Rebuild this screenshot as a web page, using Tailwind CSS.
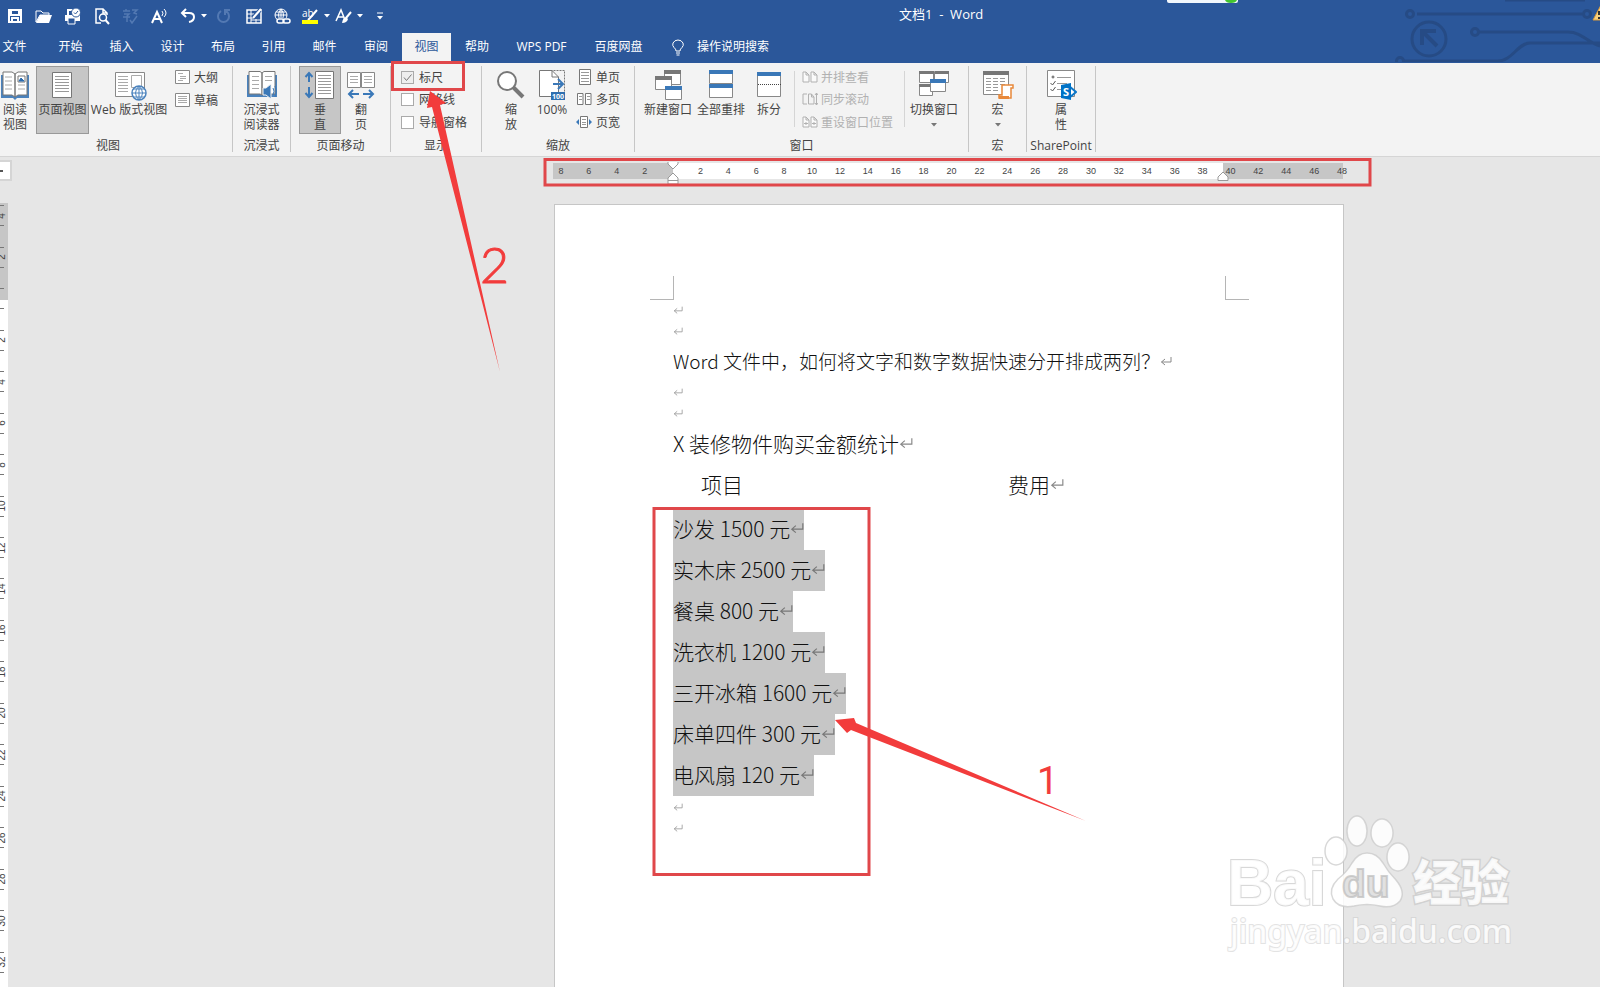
<!DOCTYPE html>
<html lang="zh-CN">
<head>
  <meta charset="UTF-8" />
  <meta name="viewport" content="width=device-width, initial-scale=1.0"/>
  <title>文档1 - Word</title>
  <script src="https://cdn.jsdelivr.net/npm/@tailwindcss/browser@4"></script>
</head>
<body class="relative flex min-h-screen flex-col overflow-hidden bg-[#e6e6e6] font-['Open_Sans','Noto_Sans_CJK_SC',sans-serif] text-xs text-[#444]">

  <!-- Shared shapes -->
  <svg class="hidden">
    <symbol id="ret" viewBox="0 0 12 12"><path d="M11 2V7H1.5M5 4L1.5 7L5 10" fill="none" stroke="currentColor"/></symbol>
    <symbol id="caret" viewBox="0 0 6 4"><path d="M0 0H6L3 3.5Z" fill="currentColor"/></symbol>
    <symbol id="twodocs" viewBox="0 0 16 14"><path d="M1 2H4L7 5V12H1ZM4 2V5H7M9 2H12L15 5V12H9ZM12 2V5H15" fill="#fafafa" stroke="currentColor"/></symbol>
  </svg>

  <!-- Title bar + tabs -->
  <header class="relative bg-[#2b579a] text-white">
    <svg class="absolute right-0 top-0" width="440" height="62" fill="none" stroke="#264b85" stroke-width="3">
      <path d="M345 0H425M257 14H422M318 32H408C422 32 428 43 440 46M440 43H370C358 43 352 61 338 61H243"/>
      <circle cx="250" cy="14" r="3.500"/><circle cx="427" cy="14" r="3.500"/><circle cx="315" cy="32" r="3.500"/><circle cx="240" cy="61" r="3.500"/>
      <circle cx="269" cy="39" r="17"/>
      <path d="M262 45V31H276M263 32L277 46" stroke-width="4"/>
      <path d="M7 0H78V1Q78 3 76 3H9Q7 3 7 1Z" fill="#f2f7fc" stroke="none"/>
      <path d="M65 0H77Q76 3 71 3Q66 3 65 0Z" fill="#43c52f" stroke="none"/>
      <path d="M433 20L441 5V20Z" fill="#fbd27c" stroke="#d89a3c" stroke-width="1"/>
      <path d="M439 11V15M439 17V19" stroke="#333" stroke-width="2"/>
    </svg>

    <div class="relative flex h-8 items-center">
      <button class="flex w-[29px] justify-center" aria-label="保存"><svg width="16" height="16" fill="none" stroke="#fff" stroke-width="2"><path d="M2 2H14V14H2Z"/><path d="M4 2V7H12V2M5 14V10H11V14"/></svg></button>
      <button class="flex w-[29px] justify-center" aria-label="打开"><svg width="18" height="16" fill="#fff"><path d="M1 14V3H6L8 5H14V7H5Z" fill="none" stroke="#fff"/><path d="M5 7H17L14 15H1Z"/></svg></button>
      <button class="flex w-[29px] justify-center" aria-label="快速打印"><svg width="18" height="17"><path d="M1 7H16V13H1Z" fill="#fff"/><path d="M4 7V2H9" stroke="#fff" fill="none" stroke-width="2"/><path d="M4 10H11V16H4Z" fill="#2b579a" stroke="#fff"/><circle cx="12" cy="4.500" r="4.500" fill="#fff" stroke="#2b579a"/><path d="M10 4.500L11.500 6L14 3" stroke="#2b579a" fill="none"/></svg></button>
      <button class="flex w-[29px] justify-center" aria-label="打印预览"><svg width="16" height="17" fill="none" stroke="#fff" stroke-width="1.500"><path d="M7 15H2V1H9L13 5V7M9 1V5H13"/><circle cx="9" cy="9.500" r="3.500"/><path d="M11.500 12L15 16" stroke-width="2"/></svg></button>
      <button class="flex w-[29px] justify-center text-[#5379b3]" aria-label="拼写检查"><svg width="17" height="16" fill="none" stroke="currentColor" stroke-width="1.500"><path d="M1 3H8M4 1V3M2 6H7L5 8V14M1 9H8M10 2H15L12 5L15 6M8 12L10 15L15 8"/></svg></button>
      <button class="flex w-[29px] justify-center" aria-label="大声朗读"><svg width="18" height="16" fill="none" stroke="#fff"><path d="M1 15L6 4L11 15M3 11H9" stroke-width="2"/><path d="M11 3Q13 5 11 8M13 1Q17 5 13 9"/></svg></button>
      <button class="flex w-[27px] justify-center" aria-label="撤消"><svg width="16" height="16" fill="none" stroke="#fff" stroke-width="2"><path d="M6 1L2 5L6 9M2 5H9Q14 5 14 9Q14 13 9 14"/></svg></button>
      <button class="flex w-[6px] justify-center" aria-label="撤消选项"><svg width="6" height="4"><use href="#caret"/></svg></button>
      <button class="flex w-[33px] justify-center text-[#5379b3]" aria-label="重复"><svg width="16" height="16" fill="none" stroke="currentColor" stroke-width="2"><path d="M5 3Q2 5 2 8.500A5.500 5.500 0 0 0 13 8.500Q13 5 10 3M9 7V2H14"/></svg></button>
      <button class="flex w-[27px] justify-center" aria-label="绘制表格"><svg width="16" height="16" fill="none" stroke="#fff"><path d="M1 2H15V15H1Z" stroke-width="1.500"/><path d="M1 6H8M1 10H7M5 2V15M10 11V15M5 12H15"/><path d="M7 10L14 2" stroke="#2b579a" stroke-width="4"/><path d="M7 10L15 1" stroke-width="2"/></svg></button>
      <button class="flex w-[30px] justify-center" aria-label="超链接"><svg width="18" height="17" fill="none" stroke="#fff"><circle cx="8" cy="7" r="6"/><path d="M2 7H14M8 1V13M3 4H13M8 1Q3 7 8 13Q13 7 8 1"/><path d="M5 10H17V16H5Z" fill="#2b579a" stroke="none"/><rect x="4" y="11" width="7" height="4" rx="2" stroke-width="1.500"/><rect x="10" y="11" width="7" height="4" rx="2" stroke-width="1.500"/></svg></button>
      <button class="flex w-[27px] justify-center" aria-label="突出显示颜色"><svg class="overflow-visible" width="17" height="17"><text x="0" y="9" font-size="10" fill="#fff">ab</text><path d="M15 2L8 10L6 12" stroke="#fff" stroke-width="2"/><path d="M0 12H16V16H0Z" fill="#ff0"/></svg></button>
      <button class="flex w-[6px] justify-center" aria-label="颜色选项"><svg width="6" height="4"><use href="#caret"/></svg></button>
      <button class="flex w-[27px] justify-center" aria-label="格式"><svg width="17" height="17" fill="none" stroke="#fff"><path d="M1 13L6 2L10 12M3 9H9" stroke-width="1.500"/><path d="M16 4L11 10" stroke-width="2"/><path d="M11 9Q8 9 7 15Q12 15 13 11Z" fill="#fff" stroke="none"/></svg></button>
      <button class="flex w-[6px] justify-center" aria-label="格式选项"><svg width="6" height="4"><use href="#caret"/></svg></button>
      <button class="flex w-[34px] justify-center" aria-label="自定义快速访问工具栏"><svg width="6" height="8"><path d="M0 1H6" stroke="#fff"/><use href="#caret" y="4" width="6" height="4"/></svg></button>
      <h1 class="absolute left-[899px] top-1 text-[13px] leading-5 whitespace-pre">文档1  -  Word</h1>
    </div>

    <nav class="relative flex h-[31px] items-stretch leading-7">
      <button class="w-[45px] pr-4 pb-px">文件</button>
      <button class="w-[51px] pb-px">开始</button>
      <button class="w-[51px] pb-px">插入</button>
      <button class="w-[51px] pb-px">设计</button>
      <button class="w-[50px] pb-px">布局</button>
      <button class="w-[51px] pb-px">引用</button>
      <button class="w-[51px] pb-px">邮件</button>
      <button class="w-[52px] pb-px">审阅</button>
      <button class="mt-px w-[49px] bg-[#f3f3f3] pb-[2px] text-[#2b579a]">视图</button>
      <button class="w-[52px] pb-px">帮助</button>
      <button class="w-[77px] pb-px">WPS PDF</button>
      <button class="w-[77px] pb-px">百度网盘</button>
      <label for="tellme" class="ml-[14px] flex w-[26px] items-center"><svg width="14" height="18" fill="none" stroke="#fff"><path d="M5 12Q5 10 3 8.500Q1 6.500 2 4Q3.500 1 7 1Q10.500 1 12 4Q13 6.500 11 8.500Q9 10 9 12ZM5 14H9M5.500 16H8.500"/></svg></label>
      <input id="tellme" type="text" placeholder="操作说明搜索" class="w-[120px] bg-transparent pb-px outline-none placeholder:text-white"/>
    </nav>
  </header>

  <!-- Ribbon -->
  <section class="flex h-[94px] shrink-0 border-b border-[#d5d5d5] bg-[#f3f3f3] pt-[3px] leading-[15px]">
    <!-- 视图 -->
    <div class="w-[232px]">
      <div class="flex h-[68px]">
        <button class="flex w-[30px] flex-col items-center pt-1"><svg class="h-8 w-8 shrink-0" fill="#fff" stroke="#777"><path d="M2 5H30V28H18L16 30L14 28H2Z" fill="#4a82bd" stroke="none"/><path d="M4 2H13L16 4V27L13 25H4ZM28 2H19L16 4V27L19 25H28Z"/><path d="M6 7H13M6 11H13M6 15H13M6 19H13M19 15H26M19 19H26" stroke="#aaa"/><path d="M19 6H26V12H19Z" stroke="#777"/><path d="M20 11L22 8L25 11Z" fill="#2b6cb0" stroke="#2b6cb0"/></svg><span class="w-6">阅读视图</span></button>
        <button class="ml-[6px] flex w-[53px] flex-col items-center whitespace-nowrap border border-[#999] bg-[#c6c6c6] pt-[3px]"><svg class="h-8 w-8 shrink-0" fill="#fff" stroke="#777"><path d="M5.500 2.500H24.500V27.500H5.500Z"/><path d="M8 6.500H22M8 9.500H22M8 12.500H22M8 15.500H22M8 18.500H22M8 21.500H22" stroke="#999"/></svg>页面视图</button>
        <button class="flex w-[80px] flex-col items-center whitespace-nowrap pt-1"><svg class="h-8 w-8 shrink-0 overflow-visible" fill="#fff" stroke="#888"><path d="M2.500 2.500H31.500V26.500H2.500Z"/><path d="M5 6.500H15M5 9.500H15M5 12.500H15M5 15.500H15M5 18.500H15M5 21.500H15" stroke="#aaa"/><path d="M18.500 5.500H28.500V17.500H18.500Z" stroke="#aaa"/><circle cx="26" cy="23" r="7" stroke="#4a82bd" stroke-width="1.500"/><path d="M19 23H33M26 16V30M26 16Q19 23 26 30Q33 23 26 16M20.500 19H31.500M20.500 27H31.500" fill="none" stroke="#4a82bd"/></svg>Web 版式视图</button>
        <div class="ml-[6px] flex flex-col">
          <button class="flex h-[22px] items-center gap-1"><svg width="15" height="14" fill="#fff" stroke="#888"><path d="M.5 .5H14.500V13.500H.5Z"/><path d="M3 3.500H8M5 6.500H11M5 8.500H11M3 10.500H8" stroke="#aaa"/></svg>大纲</button>
          <button class="flex h-6 items-center gap-1"><svg width="15" height="14" fill="#fff" stroke="#888"><path d="M.5 .5H14.500V13.500H.5Z"/><path d="M3 3.500H12M3 5.500H12M3 7.500H12M3 9.500H12" stroke="#aaa"/></svg>草稿</button>
        </div>
      </div>
      <p class="pr-4 text-center leading-6">视图</p>
    </div>
    <div class="h-[86px] w-px bg-[#c6c6c6]"></div>

    <!-- 沉浸式 -->
    <div class="w-[57px]">
      <div class="flex h-[68px] justify-center">
        <button class="flex w-12 flex-col items-center pt-1"><svg class="h-8 w-8 shrink-0" fill="#fff" stroke="#777"><path d="M1 5H31V27H1Z" fill="#4a82bd" stroke="none"/><path d="M3 1.500H14L16 3V25L14 24H3ZM29 1.500H18L16 3V25L18 24H29Z"/><path d="M6 6.500H13M6 10.500H13M6 14.500H13M6 18.500H13M19 6.500H26M19 10.500H26" stroke="#aaa"/><path d="M17 18H20L25 14V29L20 25H17Z" fill="#3a78b8" stroke="#f3f3f3"/><path d="M27 18Q29 21 27 25M29 16Q32 21 29 27" fill="none" stroke="#3a78b8"/></svg><span class="w-9">沉浸式阅读器</span></button>
      </div>
      <p class="text-center leading-6">沉浸式</p>
    </div>
    <div class="h-[86px] w-px bg-[#c6c6c6]"></div>

    <!-- 页面移动 -->
    <div class="w-[99px]">
      <div class="flex h-[68px] pl-2">
        <button class="flex w-[42px] flex-col items-center border border-[#999] bg-[#c6c6c6] pt-[3px]"><svg class="h-8 w-8 shrink-0" fill="#fff" stroke="#777"><path d="M11.500 1.500H29.500V28.500H11.500Z"/><path d="M14 5.500H27M14 8.500H27M14 11.500H27M14 14.500H27M14 17.500H27M14 20.500H27M14 23.500H27" stroke="#999"/><path d="M5 3V12M1.500 7L5 3L8.500 7M5 17V27M1.500 23L5 27L8.500 23" fill="none" stroke="#3a78b8" stroke-width="2"/></svg><span class="w-3">垂直</span></button>
        <button class="flex w-10 flex-col items-center pt-1"><svg class="h-8 w-8 shrink-0" fill="#fff" stroke="#888"><path d="M2.500 2.500H15.500V17.500H2.500ZM16.500 2.500H29.500V17.500H16.500Z"/><path d="M5 6.500H13M5 9.500H13M5 12.500H13M19 6.500H27M19 9.500H27M19 12.500H27" stroke="#aaa"/><path d="M4 24H14M8 20L4 24L8 28M18 24H28M24 20L28 24L24 28" fill="none" stroke="#3a78b8" stroke-width="2"/></svg><span class="w-3">翻页</span></button>
      </div>
      <p class="text-center leading-6">页面移动</p>
    </div>
    <div class="h-[86px] w-px bg-[#c6c6c6]"></div>

    <!-- 显示 -->
    <div class="w-[90px]">
      <div class="flex h-[68px] flex-col pl-[10px]">
        <label class="relative flex h-[22px] items-center gap-[5px]"><input type="checkbox" checked class="size-[13px] appearance-none border border-[#aaa] bg-[#eee]"/><svg class="absolute left-0 top-[5px]" width="13" height="13" fill="none" stroke="#777"><path d="M3 6.500L5.500 9.500L10.500 3.500"/></svg>标尺</label>
        <label class="flex h-[22px] items-center gap-[5px]"><input type="checkbox" class="size-[13px] appearance-none border border-[#aaa] bg-white"/>网格线</label>
        <label class="flex h-6 items-center gap-[5px]"><input type="checkbox" class="size-[13px] appearance-none border border-[#aaa] bg-white"/>导航窗格</label>
      </div>
      <p class="text-center leading-6">显示</p>
    </div>
    <div class="h-[86px] w-px bg-[#c6c6c6]"></div>

    <!-- 缩放 -->
    <div class="w-[152px]">
      <div class="flex h-[68px] pl-2">
        <button class="flex w-[42px] flex-col items-center pt-1"><svg class="h-8 w-8 shrink-0" fill="#fff" stroke="#777"><path d="M18 17L28 27" stroke-width="4"/><circle cx="12" cy="11" r="9" stroke-width="2"/></svg><span class="w-3">缩放</span></button>
        <button class="flex w-10 flex-col items-center pt-1"><svg class="h-8 w-8 shrink-0" fill="#fff" stroke="#777"><path d="M14.500 .5H28.500V22" fill="none" stroke-dasharray="2 1"/><path d="M3.500 .5H16L22.500 7V26.500H3.500Z"/><path d="M16 .5V7H22.500" fill="none"/><path d="M17 14H27M22 9L27 14L22 19" fill="none" stroke="#3a78b8" stroke-width="2"/><path d="M15 22H29V30H15Z" fill="#2f6fb0" stroke="none"/><text x="16" y="29" font-size="7" font-weight="700" fill="#fff" stroke="none">100</text></svg>100%</button>
        <div class="ml-1 flex flex-col">
          <button class="flex h-[22px] items-center gap-1"><svg width="16" height="16" fill="#fff" stroke="#777"><path d="M3.500 .5H14.500V15.500H3.500Z"/><path d="M5 3.500H13M5 6.500H13M5 9.500H13M5 12.500H13" stroke="#999"/></svg>单页</button>
          <button class="flex h-[22px] items-center gap-1"><svg width="16" height="14" fill="#fff" stroke="#777"><path d="M1.500 1.500H7V12.500H1.500ZM9.500 1.500H15V12.500H9.500Z"/><path d="M3 4.500H6M3 7.500H6M11 4.500H14M11 7.500H14" stroke="#999"/></svg>多页</button>
          <button class="flex h-6 items-center gap-1"><svg width="16" height="14" fill="#fff" stroke="#777"><path d="M4.500 1.500H11.500V12.500H4.500Z"/><path d="M6 4.500H10M6 7.500H10M6 9.500H10" stroke="#999"/><path d="M3 4V10L0 7ZM13 4V10L16 7Z" fill="#3a78b8" stroke="none"/></svg>页宽</button>
        </div>
      </div>
      <p class="text-center leading-6">缩放</p>
    </div>
    <div class="h-[86px] w-px bg-[#c6c6c6]"></div>

    <!-- 窗口 -->
    <div class="w-[333px]">
      <div class="flex h-[68px] pl-2">
        <button class="flex w-[50px] flex-col items-center whitespace-nowrap pt-1"><svg class="h-8 w-8 shrink-0" fill="#fff" stroke="#888"><path d="M12.500 1.500H28.500V14.500H12.500Z"/><path d="M12 0H29V4H12Z" fill="#777" stroke="none"/><path d="M3.500 7.500H19.500V19.500H3.500Z" stroke="#888"/><path d="M3 6H20V10H3Z" fill="#777" stroke="none"/><path d="M13.500 18.500H29.500V29.500H13.500Z"/><path d="M13 16H30V20H13Z" fill="#3a78b8" stroke="none"/></svg>新建窗口</button>
        <button class="flex w-[56px] flex-col items-center whitespace-nowrap pt-1"><svg class="h-8 w-8 shrink-0" fill="#fff" stroke="#888"><path d="M4.500 .5H27.500V13.500H4.500ZM4.500 15.500H27.500V27.500H4.500Z"/><path d="M4 0H28V4H4ZM4 14H28V18H4Z" fill="#3a78b8" stroke="none"/></svg>全部重排</button>
        <button class="flex w-[40px] flex-col items-center whitespace-nowrap pt-1"><svg class="h-8 w-8 shrink-0" fill="#fff" stroke="#888"><path d="M4.500 2.500H27.500V26.500H4.500Z"/><path d="M4 2H28V6H4Z" fill="#3a78b8" stroke="none"/><path d="M5 14.500H28" stroke-dasharray="1 1" stroke="#444"/></svg>拆分</button>
        <div class="ml-[5px] mt-[5px] h-14 w-px bg-[#d5d5d5]"></div>
        <div class="ml-[7px] flex w-[102px] flex-col text-[#b1b1b1]">
          <button class="flex h-[22px] items-center gap-[3px] whitespace-nowrap"><svg width="16" height="14"><use href="#twodocs"/></svg>并排查看</button>
          <button class="flex h-[22px] items-center gap-[3px] whitespace-nowrap"><svg width="16" height="14" fill="none" stroke="currentColor"><path d="M5 2H1V12H5M6.500 2H9.500L12 5V12H6.500ZM9.500 2V5H12M14.500 1V13M13 3L14.500 1L16 3M13 11L14.500 13L16 11"/></svg>同步滚动</button>
          <button class="flex h-6 items-center gap-[3px] whitespace-nowrap"><svg width="16" height="14"><use href="#twodocs"/><path d="M2 8.500H6M4 7V10M10 8.500H14M12 7V10" stroke="currentColor"/></svg>重设窗口位置</button>
        </div>
        <div class="mt-[5px] h-14 w-px bg-[#d5d5d5]"></div>
        <button class="ml-[2px] flex w-[54px] flex-col items-center whitespace-nowrap pt-1"><svg class="h-8 w-8 shrink-0" fill="#fff" stroke="#888"><path d="M1.500 1.500H15.500V12.500H1.500ZM16.500 1.500H30.500V12.500H16.500ZM1.500 14.500H14.500V25.500H1.500Z"/><path d="M1 1H16V4H1ZM17 1H31V4H17ZM1 14H12V17H1Z" fill="#777" stroke="none"/><path d="M12.500 10.500H27.500V21.500H12.500Z"/><path d="M12 9H28V13H12Z" fill="#3a78b8" stroke="none"/></svg>切换窗口<svg class="mt-[6px] text-[#777]" width="6" height="4"><use href="#caret"/></svg></button>
      </div>
      <p class="text-center leading-6">窗口</p>
    </div>
    <div class="h-[86px] w-px bg-[#c6c6c6]"></div>

    <!-- 宏 -->
    <div class="w-[57px]">
      <div class="flex h-[68px] justify-center">
        <button class="flex w-10 flex-col items-center pt-1"><svg class="h-8 w-8 shrink-0" fill="#fff" stroke="#888"><path d="M1.500 1.500H26.500V24.500H1.500Z"/><path d="M1 1H27V5H1Z" fill="#777" stroke="none"/><path d="M4 8.500H24M4 11.500H24M4 14.500H24M4 17.500H18M4 20.500H18" stroke="#999" stroke-dasharray="5 2"/><path d="M20 15H31V18H29V28H17V25H20Z" stroke="#e8883a" stroke-width="1.500"/><path d="M17 26H27V29H17Z" fill="#e8883a" stroke="none"/></svg>宏<svg class="mt-[6px] text-[#777]" width="6" height="4"><use href="#caret"/></svg></button>
      </div>
      <p class="text-center leading-6">宏</p>
    </div>
    <div class="h-[86px] w-px bg-[#c6c6c6]"></div>

    <!-- SharePoint -->
    <div class="w-[68px]">
      <div class="flex h-[68px] justify-center">
        <button class="flex w-10 flex-col items-center pt-1"><svg class="h-8 w-8 shrink-0" fill="#fff" stroke="#888"><path d="M2.500 .5H29.500V26.500H2.500Z"/><path d="M12 7.500H26M12 13.500H22M12 19.500H16" stroke="#999"/><circle cx="8" cy="7" r="1" stroke="#555"/><path d="M5.500 13L7.500 15L10.500 11M5.500 19L7.500 21L10.500 17" fill="none" stroke="#555"/><path d="M24 16L31 22L24 28" fill="none" stroke="#0d78c9" stroke-width="2"/><path d="M16 15L26 13V30L16 28Z" fill="#0072c6" stroke="none"/><text x="18" y="26" font-size="11" font-weight="700" fill="#fff" stroke="none">S</text></svg><span class="w-3">属性</span></button>
      </div>
      <p class="text-center leading-6">SharePoint</p>
    </div>
    <div class="h-[86px] w-px bg-[#c6c6c6]"></div>
  </section>

  <!-- Canvas -->
  <main class="flex flex-1">
    <!-- Vertical ruler -->
    <div class="flex w-3 shrink-0 flex-col pt-[3px] font-['Liberation_Sans',sans-serif] text-[10px] leading-[10px] text-[#444]">
      <button class="h-[21px] w-3 border-2 border-l-0 border-[#d5d5d5] bg-white" aria-label="制表符"><span class="block h-[2px] w-[3px] bg-[#555]"></span></button>
      <div class="relative mt-[22px] flex-1 w-2 overflow-hidden bg-white">
        <div class="h-[97px] bg-[#c6c6c6]"></div>
        <div id="vruler" class="absolute -top-2 left-0 grid h-[788px] w-1 auto-rows-fr"></div>
      </div>
    </div>

    <div class="flex flex-1 flex-col pl-[541px]">
      <!-- Horizontal ruler -->
      <div class="relative mt-[6px] flex h-4 w-[790px] shrink-0 bg-[#c6c6c6]">
        <div class="ml-[120px] w-[550px] bg-white"></div>
        <div id="hruler" class="absolute inset-y-0 -left-[6px] -right-[13px] grid auto-cols-fr grid-flow-col text-center font-['Liberation_Sans',sans-serif] text-[9px] leading-4"></div>
        <svg class="absolute left-[114px] -top-px" width="12" height="24" fill="#fff" stroke="#999"><path d="M1 -1H11V2L6 7L1 2ZM6 11L11 16V22H1V16ZM1 18.500H11"/></svg>
        <svg class="absolute left-[664px] -top-px" width="12" height="24" fill="#fff" stroke="#999"><path d="M6 10L11 15V18.500H1V15Z"/></svg>
      </div>

      <!-- Page -->
      <article class="ml-px mt-[25px] w-[790px] flex-1 border border-b-0 border-[#c6c6c6] bg-white font-['Noto_Sans_CJK_SC',sans-serif] text-[21px] font-light leading-[42px] text-[#111]">
        <div class="mt-[71px] flex h-6 justify-between pl-[95px] pr-[94px]">
          <span class="w-6 border-b border-r border-[#b5b5b5]"></span>
          <span class="w-6 border-b border-l border-[#b5b5b5]"></span>
        </div>
        <div class="-mt-px whitespace-nowrap pl-[118px]">
          <p class="flex h-[21px] items-center"><svg class="size-[10px] text-[#999]"><use href="#ret"/></svg></p>
          <p class="flex h-[21px] items-center"><svg class="size-[10px] text-[#999]"><use href="#ret"/></svg></p>
          <p class="flex h-10 items-center text-[19px]">Word 文件中，如何将文字和数字数据快速分开排成两列？<svg class="size-3 text-[#888]"><use href="#ret"/></svg></p>
          <p class="flex h-[21px] items-center"><svg class="size-[10px] text-[#999]"><use href="#ret"/></svg></p>
          <p class="flex h-[21px] items-center"><svg class="size-[10px] text-[#999]"><use href="#ret"/></svg></p>
          <p class="flex h-11 items-center pb-[5px]">X 装修物件购买金额统计<svg class="size-[14px] text-[#888]"><use href="#ret"/></svg></p>
          <p class="flex h-[42px] items-center pb-2 pl-7"><span class="w-[307px]">项目</span>费用<svg class="size-[14px] text-[#888]"><use href="#ret"/></svg></p>
          <ul class="flex flex-col items-start leading-[38px]">
            <li class="flex h-[41px] bg-[#c6c6c6]">沙发 1500 元<svg class="mt-3 size-[14px] text-[#777]"><use href="#ret"/></svg></li>
            <li class="flex h-[41px] bg-[#c6c6c6]">实木床 2500 元<svg class="mt-3 size-[14px] text-[#777]"><use href="#ret"/></svg></li>
            <li class="flex h-[41px] bg-[#c6c6c6]">餐桌 800 元<svg class="mt-3 size-[14px] text-[#777]"><use href="#ret"/></svg></li>
            <li class="flex h-[41px] bg-[#c6c6c6]">洗衣机 1200 元<svg class="mt-3 size-[14px] text-[#777]"><use href="#ret"/></svg></li>
            <li class="flex h-[41px] bg-[#c6c6c6]">三开冰箱 1600 元<svg class="mt-3 size-[14px] text-[#777]"><use href="#ret"/></svg></li>
            <li class="flex h-[41px] bg-[#c6c6c6]">床单四件 300 元<svg class="mt-3 size-[14px] text-[#777]"><use href="#ret"/></svg></li>
            <li class="flex h-[41px] bg-[#c6c6c6]">电风扇 120 元<svg class="mt-3 size-[14px] text-[#777]"><use href="#ret"/></svg></li>
          </ul>
          <p class="flex h-[21px] items-center"><svg class="size-[10px] text-[#999]"><use href="#ret"/></svg></p>
          <p class="flex h-[21px] items-center"><svg class="size-[10px] text-[#999]"><use href="#ret"/></svg></p>
        </div>
      </article>
    </div>
  </main>

  <!-- Red marks -->
  <svg class="pointer-events-none absolute left-0 top-0" width="1400" height="900" fill="none" stroke="#e0474a" stroke-width="3">
    <rect x="392.500" y="62.500" width="71" height="27"/>
    <rect x="545" y="159.500" width="825" height="25.500"/>
    <rect x="654" y="508.500" width="215" height="366"/>
    <g fill="#f23c3c" stroke="none">
      <path d="M430 91L427 108L432 107L500 372L440 105L446 103Z"/>
      <path d="M835 720L854 718L856 723L1086 821L851 730L847 733Z"/>
      <text x="480" y="283" font-size="50" font-family="Lato" font-weight="300" stroke="#f23c3c" stroke-width="1">2</text>
      <text x="1037" y="794" font-size="38" font-family="Roboto">1</text>
    </g>
  </svg>

  <!-- Watermark -->
  <svg class="pointer-events-none absolute left-[1220px] top-[805px]" width="310" height="160" fill="#fff" fill-opacity=".85" stroke="#c8c8c8" stroke-opacity=".7" stroke-width="2" font-weight="700">
    <text x="7" y="100" font-size="64" font-family="Liberation Sans" paint-order="stroke">Bai</text>
    <g stroke-width="1.500">
      <ellipse cx="116" cy="46" rx="11" ry="14"/>
      <ellipse cx="137" cy="26" rx="10" ry="15"/>
      <ellipse cx="162" cy="28" rx="11" ry="14"/>
      <ellipse cx="178" cy="52" rx="11" ry="14"/>
      <path d="M147 48Q157 48 163 58Q168 67 176 75Q186 87 180 96Q173 104 160 101Q147 98 134 101Q119 104 113 94Q108 84 118 74Q127 67 132 58Q138 48 147 48Z"/>
    </g>
    <text x="122" y="92" font-size="39" font-family="Liberation Sans" fill="#ddd" stroke="#bbb">du</text>
    <text x="193" y="95" font-size="48" font-family="Noto Sans CJK SC" font-weight="900" stroke-width="3" paint-order="stroke">经验</text>
    <text x="10" y="138" font-size="32" font-family="Noto Sans" font-weight="500" stroke-opacity=".5" paint-order="stroke">jingyan.baidu.com</text>
  </svg>

  <script>
    // Ruler numbers
    const hruler = document.getElementById("hruler");
    const vruler = document.getElementById("vruler");

    for (let n = -8; n <= 48; n += 2) {
      hruler.innerHTML += `<span class="flex justify-center">${n === 0 ? "" : Math.abs(n)}</span>`;
    }

    for (let n = -4; n <= 32; n += 2) {
      vruler.innerHTML += `
        <div class="flex items-center">
          <div class="flex h-[21px] w-1 items-center justify-center border-y border-[#777]">
            <span class="-rotate-90">${n === 0 ? "" : Math.abs(n)}</span>
          </div>
        </div>`;
    }
  </script>
</body>
</html>
